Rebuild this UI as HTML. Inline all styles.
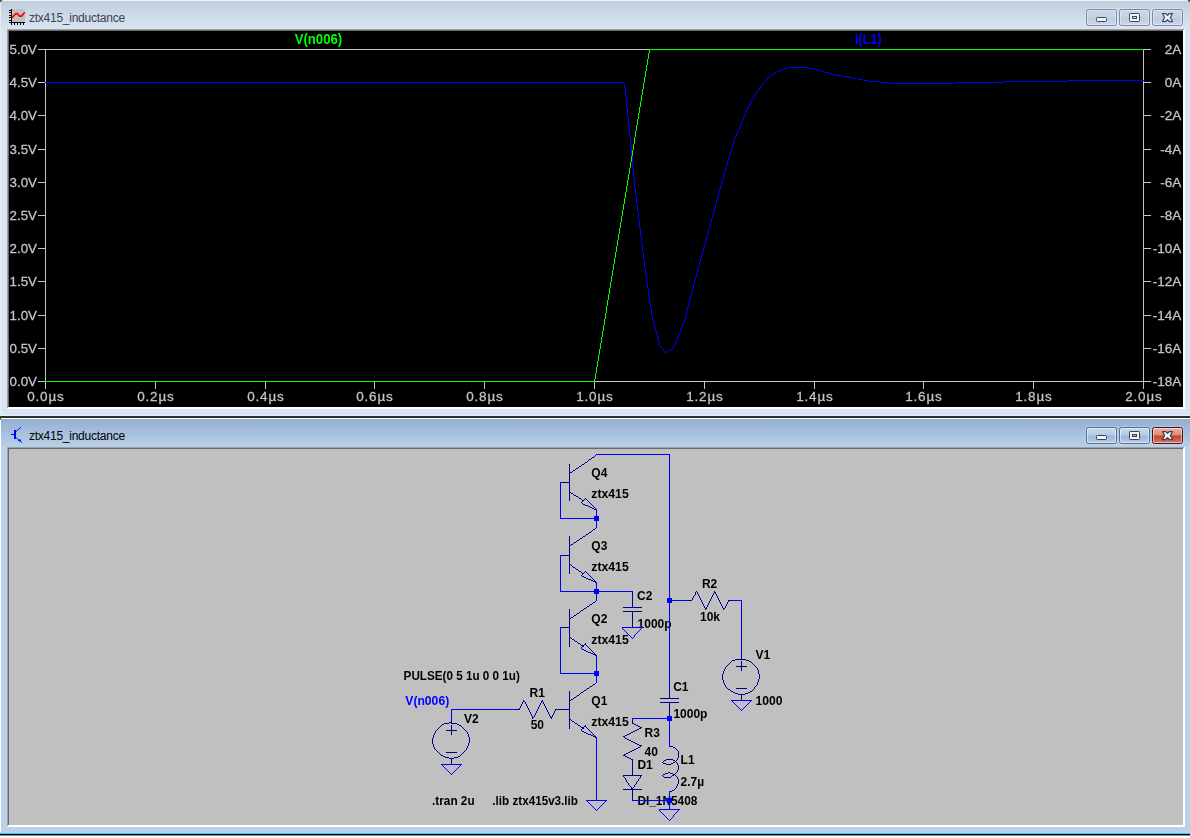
<!DOCTYPE html>
<html><head><meta charset="utf-8"><title>ztx415_inductance</title>
<style>
html,body{margin:0;padding:0;}
body{width:1190px;height:838px;overflow:hidden;background:#fff;position:relative;font-family:"Liberation Sans",sans-serif;}
.abs{position:absolute;}
.win{position:absolute;left:0;width:1190px;}
.title{position:absolute;left:29px;font-size:12px;color:#000;white-space:nowrap;letter-spacing:-0.25px;}
.btn{position:absolute;width:29px;height:15px;border:1px solid #8a9bb8;border-radius:2.5px;box-shadow:inset 0 0 0 1px rgba(255,255,255,.45);}
svg{position:absolute;left:0;top:0;}
svg text{font-family:"Liberation Sans",sans-serif;}
.pt text{stroke:#c4c4c4;stroke-width:0.28px;}
</style></head>
<body>
<div class="abs" style="left:0;top:0;width:1190px;height:416px;background:#d7e4f2;"></div>
<div class="abs" style="left:0;top:0;width:1190px;height:30px;background:linear-gradient(#bfcddb,#d9e5f3);"></div>
<div class="abs" style="left:0;top:0;width:1190px;height:1px;background:#eef1f7;"></div>
<div class="abs" style="left:0;top:0;width:1px;height:416px;background:#e9ecf3;"></div>
<div class="abs" style="left:0;top:415px;width:1190px;height:1px;background:#e6eefa;"></div>
<div class="abs" style="left:7px;top:29px;width:1178px;height:380px;background:#fff;"></div>
<div class="abs" style="left:7px;top:29px;width:1177px;height:379px;background:#a0a0a0;"></div>
<div class="abs" style="left:8px;top:30px;width:1175px;height:377px;background:#696969;"></div>
<div class="abs" style="left:9px;top:31px;width:1174px;height:376px;background:#000;"></div>
<div class="abs" style="left:7px;top:408px;width:1178px;height:1px;background:#fff;"></div>
<div class="abs" style="left:1184px;top:29px;width:1px;height:380px;background:#fff;"></div>
<div class="abs" style="left:8px;top:407px;width:1176px;height:1px;background:#fff;"></div>
<div class="abs" style="left:1183px;top:30px;width:1px;height:378px;background:#fff;"></div>
<div class="title" style="top:11px;color:#3c4350;">ztx415_inductance</div>
<div class="abs" style="left:0;top:416px;width:1190px;height:2px;background:#2e2e2e;"></div>
<div class="abs" style="left:0;top:418px;width:1190px;height:1px;background:#fff;"></div>
<div class="abs" style="left:0;top:419px;width:1190px;height:414px;background:#b9d1ea;"></div>
<div class="abs" style="left:0;top:419px;width:1190px;height:29px;background:linear-gradient(#94b0d0,#b9d1ea);"></div>
<div class="abs" style="left:0;top:418px;width:1px;height:416px;background:#fff;"></div>
<div class="abs" style="left:0;top:832px;width:1190px;height:1px;background:#c5d0ec;"></div>
<div class="abs" style="left:0;top:833px;width:1190px;height:1px;background:#2fd0e8;"></div>
<div class="abs" style="left:0;top:834px;width:1190px;height:1px;background:#000;"></div>
<div class="abs" style="left:0;top:835px;width:1190px;height:1px;background:#8a8a8a;"></div>
<div class="abs" style="left:0;top:836px;width:1190px;height:2px;background:#fff;"></div>
<div class="abs" style="left:7px;top:447px;width:1178px;height:380px;background:#fff;"></div>
<div class="abs" style="left:7px;top:447px;width:1177px;height:379px;background:#a0a0a0;"></div>
<div class="abs" style="left:8px;top:448px;width:1175px;height:377px;background:#696969;"></div>
<div class="abs" style="left:9px;top:449px;width:1174px;height:376px;background:#c0c0c0;"></div>
<div class="abs" style="left:8px;top:825px;width:1176px;height:1px;background:#fff;"></div>
<div class="abs" style="left:1183px;top:448px;width:1px;height:378px;background:#fff;"></div>
<div class="title" style="top:429px;">ztx415_inductance</div>
<div class="btn" style="left:1086px;top:9px;width:29px;background:linear-gradient(#c8d6e6 0%,#c5d3e4 47%,#bccbde 53%,#cbd9ea 100%);border-color:#7a88ac;box-shadow:inset 0 0 0 1px rgba(255,255,255,.35),0 0 0 1px rgba(240,246,252,.35);"></div><div class="btn" style="left:1119px;top:9px;width:29px;background:linear-gradient(#c8d6e6 0%,#c5d3e4 47%,#bccbde 53%,#cbd9ea 100%);border-color:#7a88ac;box-shadow:inset 0 0 0 1px rgba(255,255,255,.35),0 0 0 1px rgba(240,246,252,.35);"></div><div class="btn" style="left:1152px;top:9px;width:29px;background:linear-gradient(#c8d6e6 0%,#c5d3e4 47%,#bccbde 53%,#cbd9ea 100%);border-color:#7a88ac;box-shadow:inset 0 0 0 1px rgba(255,255,255,.35),0 0 0 1px rgba(240,246,252,.35);"></div>
<div class="btn" style="left:1086px;top:427px;width:29px;background:linear-gradient(#c6d8ee 0%,#b6cce6 47%,#9cb8d8 53%,#b4cce7 100%);border-color:#586d92;box-shadow:inset 0 0 0 1px rgba(255,255,255,.5),0 0 0 1px rgba(200,225,250,.35);"></div><div class="btn" style="left:1119px;top:427px;width:29px;background:linear-gradient(#c6d8ee 0%,#b6cce6 47%,#9cb8d8 53%,#b4cce7 100%);border-color:#586d92;box-shadow:inset 0 0 0 1px rgba(255,255,255,.5),0 0 0 1px rgba(200,225,250,.35);"></div><div class="btn" style="left:1152px;top:427px;width:29px;background:linear-gradient(#eeb0a1 0%,#dd8b78 47%,#c2442a 53%,#d97a63 100%);border-color:#4a0f1c;box-shadow:inset 0 0 0 1px rgba(255,255,255,.5),0 0 0 1px rgba(200,225,250,.35);"></div>
<svg width="1190" height="416" viewBox="0 0 1190 416" style="will-change:transform">
<rect x="38" y="49" width="1113" height="1" fill="#c4c4c4"/>
<rect x="38" y="381" width="1113" height="1" fill="#c4c4c4"/>
<rect x="45" y="49" width="1" height="340" fill="#c4c4c4"/>
<rect x="1143" y="49" width="1" height="340" fill="#c4c4c4"/>
<rect x="38" y="49" width="8" height="1" fill="#c4c4c4"/>
<rect x="1143" y="49" width="8" height="1" fill="#c4c4c4"/>
<rect x="38" y="82" width="8" height="1" fill="#c4c4c4"/>
<rect x="1143" y="82" width="8" height="1" fill="#c4c4c4"/>
<rect x="38" y="115" width="8" height="1" fill="#c4c4c4"/>
<rect x="1143" y="115" width="8" height="1" fill="#c4c4c4"/>
<rect x="38" y="149" width="8" height="1" fill="#c4c4c4"/>
<rect x="1143" y="149" width="8" height="1" fill="#c4c4c4"/>
<rect x="38" y="182" width="8" height="1" fill="#c4c4c4"/>
<rect x="1143" y="182" width="8" height="1" fill="#c4c4c4"/>
<rect x="38" y="215" width="8" height="1" fill="#c4c4c4"/>
<rect x="1143" y="215" width="8" height="1" fill="#c4c4c4"/>
<rect x="38" y="248" width="8" height="1" fill="#c4c4c4"/>
<rect x="1143" y="248" width="8" height="1" fill="#c4c4c4"/>
<rect x="38" y="281" width="8" height="1" fill="#c4c4c4"/>
<rect x="1143" y="281" width="8" height="1" fill="#c4c4c4"/>
<rect x="38" y="315" width="8" height="1" fill="#c4c4c4"/>
<rect x="1143" y="315" width="8" height="1" fill="#c4c4c4"/>
<rect x="38" y="348" width="8" height="1" fill="#c4c4c4"/>
<rect x="1143" y="348" width="8" height="1" fill="#c4c4c4"/>
<rect x="38" y="381" width="8" height="1" fill="#c4c4c4"/>
<rect x="1143" y="381" width="8" height="1" fill="#c4c4c4"/>
<rect x="45" y="381" width="1" height="8" fill="#c4c4c4"/>
<rect x="155" y="381" width="1" height="8" fill="#c4c4c4"/>
<rect x="265" y="381" width="1" height="8" fill="#c4c4c4"/>
<rect x="374" y="381" width="1" height="8" fill="#c4c4c4"/>
<rect x="484" y="381" width="1" height="8" fill="#c4c4c4"/>
<rect x="594" y="381" width="1" height="8" fill="#c4c4c4"/>
<rect x="704" y="381" width="1" height="8" fill="#c4c4c4"/>
<rect x="814" y="381" width="1" height="8" fill="#c4c4c4"/>
<rect x="923" y="381" width="1" height="8" fill="#c4c4c4"/>
<rect x="1033" y="381" width="1" height="8" fill="#c4c4c4"/>
<rect x="1143" y="381" width="1" height="8" fill="#c4c4c4"/>
<g class="pt">
<text x="9.6" y="53.7" font-size="13.5" fill="#c4c4c4" textLength="27.4" lengthAdjust="spacingAndGlyphs">5.0V</text>
<text x="1181.3" y="53.7" font-size="13.5" fill="#c4c4c4" text-anchor="end">2A</text>
<text x="9.6" y="86.7" font-size="13.5" fill="#c4c4c4" textLength="27.4" lengthAdjust="spacingAndGlyphs">4.5V</text>
<text x="1181.3" y="86.7" font-size="13.5" fill="#c4c4c4" text-anchor="end">0A</text>
<text x="9.6" y="119.7" font-size="13.5" fill="#c4c4c4" textLength="27.4" lengthAdjust="spacingAndGlyphs">4.0V</text>
<text x="1181.3" y="119.7" font-size="13.5" fill="#c4c4c4" text-anchor="end">-2A</text>
<text x="9.6" y="153.7" font-size="13.5" fill="#c4c4c4" textLength="27.4" lengthAdjust="spacingAndGlyphs">3.5V</text>
<text x="1181.3" y="153.7" font-size="13.5" fill="#c4c4c4" text-anchor="end">-4A</text>
<text x="9.6" y="186.7" font-size="13.5" fill="#c4c4c4" textLength="27.4" lengthAdjust="spacingAndGlyphs">3.0V</text>
<text x="1181.3" y="186.7" font-size="13.5" fill="#c4c4c4" text-anchor="end">-6A</text>
<text x="9.6" y="219.7" font-size="13.5" fill="#c4c4c4" textLength="27.4" lengthAdjust="spacingAndGlyphs">2.5V</text>
<text x="1181.3" y="219.7" font-size="13.5" fill="#c4c4c4" text-anchor="end">-8A</text>
<text x="9.6" y="252.7" font-size="13.5" fill="#c4c4c4" textLength="27.4" lengthAdjust="spacingAndGlyphs">2.0V</text>
<text x="1181.3" y="252.7" font-size="13.5" fill="#c4c4c4" text-anchor="end">-10A</text>
<text x="9.6" y="285.7" font-size="13.5" fill="#c4c4c4" textLength="27.4" lengthAdjust="spacingAndGlyphs">1.5V</text>
<text x="1181.3" y="285.7" font-size="13.5" fill="#c4c4c4" text-anchor="end">-12A</text>
<text x="9.6" y="319.7" font-size="13.5" fill="#c4c4c4" textLength="27.4" lengthAdjust="spacingAndGlyphs">1.0V</text>
<text x="1181.3" y="319.7" font-size="13.5" fill="#c4c4c4" text-anchor="end">-14A</text>
<text x="9.6" y="352.7" font-size="13.5" fill="#c4c4c4" textLength="27.4" lengthAdjust="spacingAndGlyphs">0.5V</text>
<text x="1181.3" y="352.7" font-size="13.5" fill="#c4c4c4" text-anchor="end">-16A</text>
<text x="9.6" y="385.7" font-size="13.5" fill="#c4c4c4" textLength="27.4" lengthAdjust="spacingAndGlyphs">0.0V</text>
<text x="1181.3" y="385.7" font-size="13.5" fill="#c4c4c4" text-anchor="end">-18A</text>
<text x="45.5" y="401.3" font-size="13.5" fill="#c4c4c4" text-anchor="middle" textLength="36.5" lengthAdjust="spacing">0.0µs</text>
<text x="155.5" y="401.3" font-size="13.5" fill="#c4c4c4" text-anchor="middle" textLength="36.5" lengthAdjust="spacing">0.2µs</text>
<text x="265.5" y="401.3" font-size="13.5" fill="#c4c4c4" text-anchor="middle" textLength="36.5" lengthAdjust="spacing">0.4µs</text>
<text x="374.5" y="401.3" font-size="13.5" fill="#c4c4c4" text-anchor="middle" textLength="36.5" lengthAdjust="spacing">0.6µs</text>
<text x="484.5" y="401.3" font-size="13.5" fill="#c4c4c4" text-anchor="middle" textLength="36.5" lengthAdjust="spacing">0.8µs</text>
<text x="594.5" y="401.3" font-size="13.5" fill="#c4c4c4" text-anchor="middle" textLength="36.5" lengthAdjust="spacing">1.0µs</text>
<text x="704.5" y="401.3" font-size="13.5" fill="#c4c4c4" text-anchor="middle" textLength="36.5" lengthAdjust="spacing">1.2µs</text>
<text x="814.5" y="401.3" font-size="13.5" fill="#c4c4c4" text-anchor="middle" textLength="36.5" lengthAdjust="spacing">1.4µs</text>
<text x="923.5" y="401.3" font-size="13.5" fill="#c4c4c4" text-anchor="middle" textLength="36.5" lengthAdjust="spacing">1.6µs</text>
<text x="1033.5" y="401.3" font-size="13.5" fill="#c4c4c4" text-anchor="middle" textLength="36.5" lengthAdjust="spacing">1.8µs</text>
<text x="1143.5" y="401.3" font-size="13.5" fill="#c4c4c4" text-anchor="middle" textLength="36.5" lengthAdjust="spacing">2.0µs</text>
</g>
<text x="294.7" y="43.8" font-size="14" font-weight="bold" fill="#00ff00" textLength="47.5" lengthAdjust="spacingAndGlyphs">V(n006)</text>
<text x="854.7" y="43.8" font-size="14" font-weight="bold" fill="#0000ff" textLength="26.8" lengthAdjust="spacingAndGlyphs">I(L1)</text>
<path shape-rendering="crispEdges" fill="#00ff00" stroke="none" d="M649 49h495v1h-495zM649 50h1v1h-1zM649 51h1v1h-1zM649 52h1v1h-1zM648 53h1v1h-1zM648 54h1v1h-1zM648 55h1v1h-1zM648 56h1v1h-1zM648 57h1v1h-1zM648 58h1v1h-1zM647 59h1v1h-1zM647 60h1v1h-1zM647 61h1v1h-1zM647 62h1v1h-1zM647 63h1v1h-1zM647 64h1v1h-1zM646 65h1v1h-1zM646 66h1v1h-1zM646 67h1v1h-1zM646 68h1v1h-1zM646 69h1v1h-1zM646 70h1v1h-1zM645 71h1v1h-1zM645 72h1v1h-1zM645 73h1v1h-1zM645 74h1v1h-1zM645 75h1v1h-1zM645 76h1v1h-1zM644 77h1v1h-1zM644 78h1v1h-1zM644 79h1v1h-1zM644 80h1v1h-1zM644 81h1v1h-1zM644 82h1v1h-1zM643 83h1v1h-1zM643 84h1v1h-1zM643 85h1v1h-1zM643 86h1v1h-1zM643 87h1v1h-1zM643 88h1v1h-1zM642 89h1v1h-1zM642 90h1v1h-1zM642 91h1v1h-1zM642 92h1v1h-1zM642 93h1v1h-1zM642 94h1v1h-1zM641 95h1v1h-1zM641 96h1v1h-1zM641 97h1v1h-1zM641 98h1v1h-1zM641 99h1v1h-1zM641 100h1v1h-1zM640 101h1v1h-1zM640 102h1v1h-1zM640 103h1v1h-1zM640 104h1v1h-1zM640 105h1v1h-1zM640 106h1v1h-1zM639 107h1v1h-1zM639 108h1v1h-1zM639 109h1v1h-1zM639 110h1v1h-1zM639 111h1v1h-1zM639 112h1v1h-1zM638 113h1v1h-1zM638 114h1v1h-1zM638 115h1v1h-1zM638 116h1v1h-1zM638 117h1v1h-1zM638 118h1v1h-1zM637 119h1v1h-1zM637 120h1v1h-1zM637 121h1v1h-1zM637 122h1v1h-1zM637 123h1v1h-1zM637 124h1v1h-1zM636 125h1v1h-1zM636 126h1v1h-1zM636 127h1v1h-1zM636 128h1v1h-1zM636 129h1v1h-1zM636 130h1v1h-1zM635 131h1v1h-1zM635 132h1v1h-1zM635 133h1v1h-1zM635 134h1v1h-1zM635 135h1v1h-1zM635 136h1v1h-1zM634 137h1v1h-1zM634 138h1v1h-1zM634 139h1v1h-1zM634 140h1v1h-1zM634 141h1v1h-1zM634 142h1v1h-1zM634 143h1v1h-1zM633 144h1v1h-1zM633 145h1v1h-1zM633 146h1v1h-1zM633 147h1v1h-1zM633 148h1v1h-1zM633 149h1v1h-1zM632 150h1v1h-1zM632 151h1v1h-1zM632 152h1v1h-1zM632 153h1v1h-1zM632 154h1v1h-1zM632 155h1v1h-1zM631 156h1v1h-1zM631 157h1v1h-1zM631 158h1v1h-1zM631 159h1v1h-1zM631 160h1v1h-1zM631 161h1v1h-1zM630 162h1v1h-1zM630 163h1v1h-1zM630 164h1v1h-1zM630 165h1v1h-1zM630 166h1v1h-1zM630 167h1v1h-1zM629 168h1v1h-1zM629 169h1v1h-1zM629 170h1v1h-1zM629 171h1v1h-1zM629 172h1v1h-1zM629 173h1v1h-1zM628 174h1v1h-1zM628 175h1v1h-1zM628 176h1v1h-1zM628 177h1v1h-1zM628 178h1v1h-1zM628 179h1v1h-1zM627 180h1v1h-1zM627 181h1v1h-1zM627 182h1v1h-1zM627 183h1v1h-1zM627 184h1v1h-1zM627 185h1v1h-1zM626 186h1v1h-1zM626 187h1v1h-1zM626 188h1v1h-1zM626 189h1v1h-1zM626 190h1v1h-1zM626 191h1v1h-1zM625 192h1v1h-1zM625 193h1v1h-1zM625 194h1v1h-1zM625 195h1v1h-1zM625 196h1v1h-1zM625 197h1v1h-1zM624 198h1v1h-1zM624 199h1v1h-1zM624 200h1v1h-1zM624 201h1v1h-1zM624 202h1v1h-1zM624 203h1v1h-1zM623 204h1v1h-1zM623 205h1v1h-1zM623 206h1v1h-1zM623 207h1v1h-1zM623 208h1v1h-1zM623 209h1v1h-1zM622 210h1v1h-1zM622 211h1v1h-1zM622 212h1v1h-1zM622 213h1v1h-1zM622 214h1v1h-1zM622 215h1v1h-1zM621 216h1v1h-1zM621 217h1v1h-1zM621 218h1v1h-1zM621 219h1v1h-1zM621 220h1v1h-1zM621 221h1v1h-1zM620 222h1v1h-1zM620 223h1v1h-1zM620 224h1v1h-1zM620 225h1v1h-1zM620 226h1v1h-1zM620 227h1v1h-1zM619 228h1v1h-1zM619 229h1v1h-1zM619 230h1v1h-1zM619 231h1v1h-1zM619 232h1v1h-1zM619 233h1v1h-1zM618 234h1v1h-1zM618 235h1v1h-1zM618 236h1v1h-1zM618 237h1v1h-1zM618 238h1v1h-1zM618 239h1v1h-1zM617 240h1v1h-1zM617 241h1v1h-1zM617 242h1v1h-1zM617 243h1v1h-1zM617 244h1v1h-1zM617 245h1v1h-1zM616 246h1v1h-1zM616 247h1v1h-1zM616 248h1v1h-1zM616 249h1v1h-1zM616 250h1v1h-1zM616 251h1v1h-1zM615 252h1v1h-1zM615 253h1v1h-1zM615 254h1v1h-1zM615 255h1v1h-1zM615 256h1v1h-1zM615 257h1v1h-1zM614 258h1v1h-1zM614 259h1v1h-1zM614 260h1v1h-1zM614 261h1v1h-1zM614 262h1v1h-1zM614 263h1v1h-1zM613 264h1v1h-1zM613 265h1v1h-1zM613 266h1v1h-1zM613 267h1v1h-1zM613 268h1v1h-1zM613 269h1v1h-1zM612 270h1v1h-1zM612 271h1v1h-1zM612 272h1v1h-1zM612 273h1v1h-1zM612 274h1v1h-1zM612 275h1v1h-1zM611 276h1v1h-1zM611 277h1v1h-1zM611 278h1v1h-1zM611 279h1v1h-1zM611 280h1v1h-1zM611 281h1v1h-1zM610 282h1v1h-1zM610 283h1v1h-1zM610 284h1v1h-1zM610 285h1v1h-1zM610 286h1v1h-1zM610 287h1v1h-1zM609 288h1v1h-1zM609 289h1v1h-1zM609 290h1v1h-1zM609 291h1v1h-1zM609 292h1v1h-1zM609 293h1v1h-1zM608 294h1v1h-1zM608 295h1v1h-1zM608 296h1v1h-1zM608 297h1v1h-1zM608 298h1v1h-1zM608 299h1v1h-1zM607 300h1v1h-1zM607 301h1v1h-1zM607 302h1v1h-1zM607 303h1v1h-1zM607 304h1v1h-1zM607 305h1v1h-1zM606 306h1v1h-1zM606 307h1v1h-1zM606 308h1v1h-1zM606 309h1v1h-1zM606 310h1v1h-1zM606 311h1v1h-1zM606 312h1v1h-1zM605 313h1v1h-1zM605 314h1v1h-1zM605 315h1v1h-1zM605 316h1v1h-1zM605 317h1v1h-1zM605 318h1v1h-1zM604 319h1v1h-1zM604 320h1v1h-1zM604 321h1v1h-1zM604 322h1v1h-1zM604 323h1v1h-1zM604 324h1v1h-1zM603 325h1v1h-1zM603 326h1v1h-1zM603 327h1v1h-1zM603 328h1v1h-1zM603 329h1v1h-1zM603 330h1v1h-1zM602 331h1v1h-1zM602 332h1v1h-1zM602 333h1v1h-1zM602 334h1v1h-1zM602 335h1v1h-1zM602 336h1v1h-1zM601 337h1v1h-1zM601 338h1v1h-1zM601 339h1v1h-1zM601 340h1v1h-1zM601 341h1v1h-1zM601 342h1v1h-1zM600 343h1v1h-1zM600 344h1v1h-1zM600 345h1v1h-1zM600 346h1v1h-1zM600 347h1v1h-1zM600 348h1v1h-1zM599 349h1v1h-1zM599 350h1v1h-1zM599 351h1v1h-1zM599 352h1v1h-1zM599 353h1v1h-1zM599 354h1v1h-1zM598 355h1v1h-1zM598 356h1v1h-1zM598 357h1v1h-1zM598 358h1v1h-1zM598 359h1v1h-1zM598 360h1v1h-1zM597 361h1v1h-1zM597 362h1v1h-1zM597 363h1v1h-1zM597 364h1v1h-1zM597 365h1v1h-1zM597 366h1v1h-1zM596 367h1v1h-1zM596 368h1v1h-1zM596 369h1v1h-1zM596 370h1v1h-1zM596 371h1v1h-1zM596 372h1v1h-1zM595 373h1v1h-1zM595 374h1v1h-1zM595 375h1v1h-1zM595 376h1v1h-1zM595 377h1v1h-1zM595 378h1v1h-1zM594 379h1v1h-1zM594 380h1v1h-1zM45 381h550v1h-550z"/>
<path shape-rendering="crispEdges" fill="#0000ff" stroke="none" d="M788 67h20v1h-20zM784 68h4v1h-4zM808 68h6v1h-6zM782 69h2v1h-2zM814 69h4v1h-4zM779 70h3v1h-3zM818 70h4v1h-4zM777 71h2v1h-2zM822 71h3v1h-3zM775 72h2v1h-2zM825 72h4v1h-4zM773 73h2v1h-2zM829 73h3v1h-3zM772 74h1v1h-1zM832 74h5v1h-5zM771 75h1v1h-1zM837 75h5v1h-5zM770 76h1v1h-1zM842 76h6v1h-6zM768 77h2v1h-2zM848 77h5v1h-5zM767 78h1v1h-1zM853 78h5v1h-5zM767 79h1v1h-1zM858 79h5v1h-5zM766 80h1v1h-1zM863 80h5v1h-5zM1068 80h76v1h-76zM765 81h1v1h-1zM868 81h12v1h-12zM1004 81h64v1h-64zM45 82h579v1h-579zM764 82h1v1h-1zM880 82h9v1h-9zM954 82h50v1h-50zM624 83h1v1h-1zM763 83h1v1h-1zM889 83h65v1h-65zM624 84h1v1h-1zM762 84h1v1h-1zM624 85h1v1h-1zM761 85h1v1h-1zM624 86h1v1h-1zM761 86h1v1h-1zM624 87h1v1h-1zM760 87h1v1h-1zM624 88h1v1h-1zM759 88h1v1h-1zM625 89h1v1h-1zM759 89h1v1h-1zM625 90h1v1h-1zM758 90h1v1h-1zM625 91h1v1h-1zM757 91h1v1h-1zM625 92h1v1h-1zM756 92h1v1h-1zM625 93h1v1h-1zM756 93h1v1h-1zM625 94h1v1h-1zM755 94h1v1h-1zM625 95h1v1h-1zM754 95h1v1h-1zM625 96h1v1h-1zM754 96h1v1h-1zM625 97h1v1h-1zM753 97h1v1h-1zM626 98h1v1h-1zM753 98h1v1h-1zM626 99h1v1h-1zM752 99h1v1h-1zM626 100h1v1h-1zM751 100h1v1h-1zM626 101h1v1h-1zM751 101h1v1h-1zM626 102h1v1h-1zM750 102h1v1h-1zM626 103h1v1h-1zM750 103h1v1h-1zM626 104h1v1h-1zM749 104h1v1h-1zM626 105h1v1h-1zM749 105h1v1h-1zM626 106h1v1h-1zM748 106h1v1h-1zM627 107h1v1h-1zM748 107h1v1h-1zM627 108h1v1h-1zM747 108h1v1h-1zM627 109h1v1h-1zM747 109h1v1h-1zM627 110h1v1h-1zM746 110h1v1h-1zM627 111h1v1h-1zM746 111h1v1h-1zM627 112h1v1h-1zM745 112h1v1h-1zM627 113h1v1h-1zM745 113h1v1h-1zM627 114h1v1h-1zM745 114h1v1h-1zM627 115h1v1h-1zM744 115h1v1h-1zM627 116h1v1h-1zM744 116h1v1h-1zM628 117h1v1h-1zM743 117h1v1h-1zM628 118h1v1h-1zM743 118h1v1h-1zM628 119h1v1h-1zM743 119h1v1h-1zM628 120h1v1h-1zM742 120h1v1h-1zM628 121h1v1h-1zM742 121h1v1h-1zM628 122h1v1h-1zM741 122h1v1h-1zM628 123h1v1h-1zM741 123h1v1h-1zM628 124h1v1h-1zM740 124h1v1h-1zM628 125h1v1h-1zM740 125h1v1h-1zM629 126h1v1h-1zM740 126h1v1h-1zM629 127h1v1h-1zM739 127h1v1h-1zM629 128h1v1h-1zM739 128h1v1h-1zM629 129h1v1h-1zM738 129h1v1h-1zM629 130h1v1h-1zM738 130h1v1h-1zM629 131h1v1h-1zM737 131h1v1h-1zM629 132h1v1h-1zM737 132h1v1h-1zM629 133h1v1h-1zM737 133h1v1h-1zM629 134h1v1h-1zM736 134h1v1h-1zM629 135h1v1h-1zM736 135h1v1h-1zM630 136h1v1h-1zM735 136h1v1h-1zM630 137h1v1h-1zM735 137h1v1h-1zM630 138h1v1h-1zM734 138h1v1h-1zM630 139h1v1h-1zM734 139h1v1h-1zM630 140h1v1h-1zM733 140h1v1h-1zM630 141h1v1h-1zM733 141h1v1h-1zM630 142h1v1h-1zM733 142h1v1h-1zM630 143h1v1h-1zM733 143h1v1h-1zM630 144h1v1h-1zM732 144h1v1h-1zM630 145h1v1h-1zM732 145h1v1h-1zM631 146h1v1h-1zM732 146h1v1h-1zM631 147h1v1h-1zM732 147h1v1h-1zM631 148h1v1h-1zM731 148h1v1h-1zM631 149h1v1h-1zM731 149h1v1h-1zM631 150h1v1h-1zM731 150h1v1h-1zM631 151h1v1h-1zM730 151h1v1h-1zM631 152h1v1h-1zM730 152h1v1h-1zM631 153h1v1h-1zM730 153h1v1h-1zM631 154h1v1h-1zM729 154h1v1h-1zM631 155h1v1h-1zM729 155h1v1h-1zM632 156h1v1h-1zM729 156h1v1h-1zM632 157h1v1h-1zM729 157h1v1h-1zM632 158h1v1h-1zM728 158h1v1h-1zM632 159h1v1h-1zM728 159h1v1h-1zM632 160h1v1h-1zM728 160h1v1h-1zM632 161h1v1h-1zM727 161h1v1h-1zM632 162h1v1h-1zM727 162h1v1h-1zM632 163h1v1h-1zM727 163h1v1h-1zM632 164h1v1h-1zM727 164h1v1h-1zM632 165h1v1h-1zM726 165h1v1h-1zM632 166h1v1h-1zM726 166h1v1h-1zM633 167h1v1h-1zM726 167h1v1h-1zM633 168h1v1h-1zM725 168h1v1h-1zM633 169h1v1h-1zM725 169h1v1h-1zM633 170h1v1h-1zM725 170h1v1h-1zM633 171h1v1h-1zM725 171h1v1h-1zM633 172h1v1h-1zM724 172h1v1h-1zM633 173h1v1h-1zM724 173h1v1h-1zM633 174h1v1h-1zM724 174h1v1h-1zM633 175h1v1h-1zM723 175h1v1h-1zM633 176h1v1h-1zM723 176h1v1h-1zM633 177h1v1h-1zM723 177h1v1h-1zM634 178h1v1h-1zM723 178h1v1h-1zM634 179h1v1h-1zM722 179h1v1h-1zM634 180h1v1h-1zM722 180h1v1h-1zM634 181h1v1h-1zM722 181h1v1h-1zM634 182h1v1h-1zM721 182h1v1h-1zM634 183h1v1h-1zM721 183h1v1h-1zM634 184h1v1h-1zM721 184h1v1h-1zM634 185h1v1h-1zM721 185h1v1h-1zM634 186h1v1h-1zM720 186h1v1h-1zM635 187h1v1h-1zM720 187h1v1h-1zM635 188h1v1h-1zM720 188h1v1h-1zM635 189h1v1h-1zM719 189h1v1h-1zM635 190h1v1h-1zM719 190h1v1h-1zM635 191h1v1h-1zM719 191h1v1h-1zM635 192h1v1h-1zM719 192h1v1h-1zM635 193h1v1h-1zM718 193h1v1h-1zM635 194h1v1h-1zM718 194h1v1h-1zM636 195h1v1h-1zM718 195h1v1h-1zM636 196h1v1h-1zM718 196h1v1h-1zM636 197h1v1h-1zM717 197h1v1h-1zM636 198h1v1h-1zM717 198h1v1h-1zM636 199h1v1h-1zM717 199h1v1h-1zM636 200h1v1h-1zM716 200h1v1h-1zM636 201h1v1h-1zM716 201h1v1h-1zM636 202h1v1h-1zM716 202h1v1h-1zM636 203h1v1h-1zM716 203h1v1h-1zM637 204h1v1h-1zM715 204h1v1h-1zM637 205h1v1h-1zM715 205h1v1h-1zM637 206h1v1h-1zM715 206h1v1h-1zM637 207h1v1h-1zM715 207h1v1h-1zM637 208h1v1h-1zM714 208h1v1h-1zM637 209h1v1h-1zM714 209h1v1h-1zM637 210h1v1h-1zM714 210h1v1h-1zM637 211h1v1h-1zM713 211h1v1h-1zM638 212h1v1h-1zM713 212h1v1h-1zM638 213h1v1h-1zM713 213h1v1h-1zM638 214h1v1h-1zM713 214h1v1h-1zM638 215h1v1h-1zM712 215h1v1h-1zM638 216h1v1h-1zM712 216h1v1h-1zM638 217h1v1h-1zM712 217h1v1h-1zM638 218h1v1h-1zM711 218h1v1h-1zM638 219h1v1h-1zM711 219h1v1h-1zM639 220h1v1h-1zM711 220h1v1h-1zM639 221h1v1h-1zM711 221h1v1h-1zM639 222h1v1h-1zM710 222h1v1h-1zM639 223h1v1h-1zM710 223h1v1h-1zM639 224h1v1h-1zM710 224h1v1h-1zM639 225h1v1h-1zM710 225h1v1h-1zM639 226h1v1h-1zM709 226h1v1h-1zM639 227h1v1h-1zM709 227h1v1h-1zM640 228h1v1h-1zM709 228h1v1h-1zM640 229h1v1h-1zM708 229h1v1h-1zM640 230h1v1h-1zM708 230h1v1h-1zM640 231h1v1h-1zM708 231h1v1h-1zM640 232h1v1h-1zM708 232h1v1h-1zM640 233h1v1h-1zM707 233h1v1h-1zM640 234h1v1h-1zM707 234h1v1h-1zM640 235h1v1h-1zM707 235h1v1h-1zM640 236h1v1h-1zM706 236h1v1h-1zM641 237h1v1h-1zM706 237h1v1h-1zM641 238h1v1h-1zM706 238h1v1h-1zM641 239h1v1h-1zM706 239h1v1h-1zM641 240h1v1h-1zM705 240h1v1h-1zM641 241h1v1h-1zM705 241h1v1h-1zM641 242h1v1h-1zM705 242h1v1h-1zM641 243h1v1h-1zM705 243h1v1h-1zM641 244h1v1h-1zM704 244h1v1h-1zM642 245h1v1h-1zM704 245h1v1h-1zM642 246h1v1h-1zM704 246h1v1h-1zM642 247h1v1h-1zM703 247h1v1h-1zM642 248h1v1h-1zM703 248h1v1h-1zM642 249h1v1h-1zM703 249h1v1h-1zM642 250h1v1h-1zM703 250h1v1h-1zM642 251h1v1h-1zM702 251h1v1h-1zM642 252h1v1h-1zM702 252h1v1h-1zM643 253h1v1h-1zM702 253h1v1h-1zM643 254h1v1h-1zM702 254h1v1h-1zM643 255h1v1h-1zM701 255h1v1h-1zM643 256h1v1h-1zM701 256h1v1h-1zM643 257h1v1h-1zM701 257h1v1h-1zM643 258h1v1h-1zM700 258h1v1h-1zM643 259h1v1h-1zM700 259h1v1h-1zM644 260h1v1h-1zM700 260h1v1h-1zM644 261h1v1h-1zM700 261h1v1h-1zM644 262h1v1h-1zM699 262h1v1h-1zM644 263h1v1h-1zM699 263h1v1h-1zM644 264h1v1h-1zM699 264h1v1h-1zM644 265h1v1h-1zM699 265h1v1h-1zM644 266h1v1h-1zM698 266h1v1h-1zM645 267h1v1h-1zM698 267h1v1h-1zM645 268h1v1h-1zM698 268h1v1h-1zM645 269h1v1h-1zM697 269h1v1h-1zM645 270h1v1h-1zM697 270h1v1h-1zM645 271h1v1h-1zM697 271h1v1h-1zM645 272h1v1h-1zM697 272h1v1h-1zM645 273h1v1h-1zM696 273h1v1h-1zM645 274h1v1h-1zM696 274h1v1h-1zM646 275h1v1h-1zM696 275h1v1h-1zM646 276h1v1h-1zM696 276h1v1h-1zM646 277h1v1h-1zM695 277h1v1h-1zM646 278h1v1h-1zM695 278h1v1h-1zM646 279h1v1h-1zM695 279h1v1h-1zM646 280h1v1h-1zM694 280h1v1h-1zM646 281h1v1h-1zM694 281h1v1h-1zM647 282h1v1h-1zM694 282h1v1h-1zM647 283h1v1h-1zM694 283h1v1h-1zM647 284h1v1h-1zM693 284h1v1h-1zM647 285h1v1h-1zM693 285h1v1h-1zM647 286h1v1h-1zM693 286h1v1h-1zM647 287h1v1h-1zM693 287h1v1h-1zM647 288h1v1h-1zM692 288h1v1h-1zM648 289h1v1h-1zM692 289h1v1h-1zM648 290h1v1h-1zM692 290h1v1h-1zM648 291h1v1h-1zM692 291h1v1h-1zM648 292h1v1h-1zM691 292h1v1h-1zM648 293h1v1h-1zM691 293h1v1h-1zM648 294h1v1h-1zM691 294h1v1h-1zM648 295h1v1h-1zM690 295h1v1h-1zM648 296h1v1h-1zM690 296h1v1h-1zM649 297h1v1h-1zM690 297h1v1h-1zM649 298h1v1h-1zM690 298h1v1h-1zM649 299h1v1h-1zM689 299h1v1h-1zM649 300h1v1h-1zM689 300h1v1h-1zM649 301h1v1h-1zM689 301h1v1h-1zM649 302h1v1h-1zM689 302h1v1h-1zM650 303h1v1h-1zM688 303h1v1h-1zM650 304h1v1h-1zM688 304h1v1h-1zM650 305h1v1h-1zM688 305h1v1h-1zM650 306h1v1h-1zM688 306h1v1h-1zM650 307h1v1h-1zM687 307h1v1h-1zM650 308h1v1h-1zM687 308h1v1h-1zM651 309h1v1h-1zM687 309h1v1h-1zM651 310h1v1h-1zM687 310h1v1h-1zM651 311h1v1h-1zM686 311h1v1h-1zM651 312h1v1h-1zM686 312h1v1h-1zM651 313h1v1h-1zM686 313h1v1h-1zM651 314h1v1h-1zM686 314h1v1h-1zM652 315h1v1h-1zM685 315h1v1h-1zM652 316h1v1h-1zM685 316h1v1h-1zM652 317h1v1h-1zM685 317h1v1h-1zM652 318h1v1h-1zM685 318h1v1h-1zM652 319h1v1h-1zM684 319h1v1h-1zM652 320h1v1h-1zM684 320h1v1h-1zM653 321h1v1h-1zM684 321h1v1h-1zM653 322h1v1h-1zM683 322h1v1h-1zM653 323h1v1h-1zM683 323h1v1h-1zM654 324h1v1h-1zM682 324h1v1h-1zM654 325h1v1h-1zM682 325h1v1h-1zM654 326h1v1h-1zM682 326h1v1h-1zM655 327h1v1h-1zM681 327h1v1h-1zM655 328h1v1h-1zM681 328h1v1h-1zM655 329h1v1h-1zM680 329h1v1h-1zM655 330h1v1h-1zM680 330h1v1h-1zM656 331h1v1h-1zM680 331h1v1h-1zM656 332h1v1h-1zM679 332h1v1h-1zM656 333h1v1h-1zM679 333h1v1h-1zM656 334h1v1h-1zM678 334h1v1h-1zM657 335h1v1h-1zM678 335h1v1h-1zM657 336h1v1h-1zM678 336h1v1h-1zM657 337h1v1h-1zM677 337h1v1h-1zM658 338h1v1h-1zM677 338h1v1h-1zM658 339h1v1h-1zM676 339h1v1h-1zM658 340h1v1h-1zM676 340h1v1h-1zM658 341h1v1h-1zM676 341h1v1h-1zM659 342h1v1h-1zM675 342h1v1h-1zM659 343h1v1h-1zM675 343h1v1h-1zM659 344h1v1h-1zM674 344h1v1h-1zM659 345h1v1h-1zM674 345h1v1h-1zM660 346h1v1h-1zM673 346h1v1h-1zM661 347h1v1h-1zM673 347h1v1h-1zM662 348h1v1h-1zM672 348h1v1h-1zM663 349h1v1h-1zM671 349h1v1h-1zM663 350h1v1h-1zM669 350h2v1h-2zM664 351h1v1h-1zM667 351h2v1h-2zM665 352h2v1h-2z"/>
</svg>

<svg width="1190" height="838" viewBox="0 0 1190 838">
<g shape-rendering="crispEdges" fill="none" stroke-width="1" stroke-linecap="square">
</g>
<path shape-rendering="crispEdges" fill="#00008b" stroke="none" d="M596 454h1v1h-1zM595 455h1v1h-1zM594 456h1v1h-1zM592 457h2v1h-2zM591 458h1v1h-1zM589 459h2v1h-2zM588 460h1v1h-1zM587 461h1v1h-1zM585 462h2v1h-2zM584 463h1v1h-1zM569 464h1v1h-1zM582 464h2v1h-2zM569 465h1v1h-1zM581 465h1v1h-1zM569 466h1v1h-1zM579 466h2v1h-2zM569 467h1v1h-1zM578 467h1v1h-1zM569 468h1v1h-1zM576 468h2v1h-2zM569 469h1v1h-1zM575 469h1v1h-1zM569 470h1v1h-1zM573 470h2v1h-2zM569 471h1v1h-1zM572 471h1v1h-1zM569 472h3v1h-3zM569 473h1v1h-1zM569 474h1v1h-1zM569 475h1v1h-1zM569 476h1v1h-1zM569 477h1v1h-1zM569 478h1v1h-1zM569 479h1v1h-1zM569 480h1v1h-1zM569 481h1v1h-1zM560 482h10v1h-10zM569 483h1v1h-1zM569 484h1v1h-1zM569 485h1v1h-1zM569 486h1v1h-1zM569 487h1v1h-1zM569 488h1v1h-1zM569 489h1v1h-1zM569 490h1v1h-1zM569 491h1v1h-1zM569 492h2v1h-2zM569 493h1v1h-1zM571 493h2v1h-2zM569 494h1v1h-1zM573 494h1v1h-1zM569 495h1v1h-1zM574 495h2v1h-2zM569 496h1v1h-1zM576 496h2v1h-2zM569 497h1v1h-1zM578 497h1v1h-1zM569 498h1v1h-1zM579 498h2v1h-2zM585 498h1v1h-1zM569 499h1v1h-1zM581 499h1v1h-1zM584 499h1v1h-1zM586 499h1v1h-1zM569 500h1v1h-1zM582 500h2v1h-2zM587 500h1v1h-1zM582 501h1v1h-1zM588 501h1v1h-1zM581 502h1v1h-1zM589 502h1v1h-1zM582 503h1v1h-1zM590 503h1v1h-1zM583 504h2v1h-2zM591 504h1v1h-1zM585 505h3v1h-3zM592 505h1v1h-1zM588 506h2v1h-2zM593 506h1v1h-1zM590 507h2v1h-2zM594 507h1v1h-1zM592 508h2v1h-2zM595 508h1v1h-1zM594 509h3v1h-3zM596 527h1v1h-1zM595 528h1v1h-1zM593 529h2v1h-2zM592 530h1v1h-1zM591 531h1v1h-1zM589 532h2v1h-2zM588 533h1v1h-1zM586 534h2v1h-2zM585 535h1v1h-1zM569 536h1v1h-1zM583 536h2v1h-2zM569 537h1v1h-1zM582 537h1v1h-1zM569 538h1v1h-1zM580 538h2v1h-2zM569 539h1v1h-1zM579 539h1v1h-1zM569 540h1v1h-1zM577 540h2v1h-2zM569 541h1v1h-1zM576 541h1v1h-1zM569 542h1v1h-1zM574 542h2v1h-2zM569 543h1v1h-1zM573 543h1v1h-1zM569 544h1v1h-1zM571 544h2v1h-2zM569 545h2v1h-2zM569 546h1v1h-1zM569 547h1v1h-1zM569 548h1v1h-1zM569 549h1v1h-1zM569 550h1v1h-1zM569 551h1v1h-1zM569 552h1v1h-1zM569 553h1v1h-1zM569 554h1v1h-1zM560 555h10v1h-10zM569 556h1v1h-1zM569 557h1v1h-1zM569 558h1v1h-1zM569 559h1v1h-1zM569 560h1v1h-1zM569 561h1v1h-1zM569 562h1v1h-1zM569 563h1v1h-1zM569 564h2v1h-2zM569 565h1v1h-1zM571 565h1v1h-1zM569 566h1v1h-1zM572 566h1v1h-1zM569 567h1v1h-1zM573 567h2v1h-2zM569 568h1v1h-1zM575 568h1v1h-1zM569 569h1v1h-1zM576 569h2v1h-2zM569 570h1v1h-1zM578 570h1v1h-1zM569 571h1v1h-1zM579 571h2v1h-2zM585 571h1v1h-1zM569 572h1v1h-1zM581 572h1v1h-1zM584 572h1v1h-1zM586 572h1v1h-1zM569 573h1v1h-1zM582 573h2v1h-2zM587 573h1v1h-1zM582 574h1v1h-1zM588 574h1v1h-1zM581 575h1v1h-1zM589 575h1v1h-1zM582 576h2v1h-2zM590 576h1v1h-1zM584 577h2v1h-2zM591 577h1v1h-1zM586 578h2v1h-2zM592 578h1v1h-1zM588 579h3v1h-3zM593 579h1v1h-1zM591 580h2v1h-2zM594 580h1v1h-1zM593 581h3v1h-3zM595 582h2v1h-2zM632 591h1v1h-1zM696 591h1v1h-1zM714 591h1v1h-1zM632 592h1v1h-1zM695 592h1v1h-1zM697 592h1v1h-1zM714 592h2v1h-2zM632 593h1v1h-1zM695 593h1v1h-1zM697 593h1v1h-1zM713 593h1v1h-1zM715 593h1v1h-1zM632 594h1v1h-1zM695 594h1v1h-1zM698 594h1v1h-1zM713 594h1v1h-1zM716 594h1v1h-1zM632 595h1v1h-1zM694 595h1v1h-1zM698 595h1v1h-1zM712 595h1v1h-1zM716 595h1v1h-1zM632 596h1v1h-1zM693 596h1v1h-1zM699 596h1v1h-1zM712 596h1v1h-1zM717 596h1v1h-1zM632 597h1v1h-1zM693 597h1v1h-1zM699 597h1v1h-1zM711 597h1v1h-1zM717 597h1v1h-1zM632 598h1v1h-1zM692 598h1v1h-1zM700 598h1v1h-1zM711 598h1v1h-1zM718 598h1v1h-1zM632 599h1v1h-1zM692 599h1v1h-1zM700 599h1v1h-1zM710 599h1v1h-1zM718 599h1v1h-1zM596 600h1v1h-1zM632 600h1v1h-1zM687 600h5v1h-5zM701 600h1v1h-1zM710 600h1v1h-1zM719 600h1v1h-1zM728 600h5v1h-5zM595 601h1v1h-1zM632 601h1v1h-1zM701 601h1v1h-1zM709 601h1v1h-1zM719 601h1v1h-1zM728 601h1v1h-1zM593 602h2v1h-2zM632 602h1v1h-1zM702 602h1v1h-1zM709 602h1v1h-1zM720 602h1v1h-1zM727 602h1v1h-1zM592 603h1v1h-1zM632 603h1v1h-1zM702 603h1v1h-1zM708 603h1v1h-1zM720 603h1v1h-1zM727 603h1v1h-1zM590 604h2v1h-2zM632 604h1v1h-1zM703 604h1v1h-1zM708 604h1v1h-1zM721 604h1v1h-1zM726 604h1v1h-1zM589 605h1v1h-1zM632 605h1v1h-1zM703 605h1v1h-1zM707 605h1v1h-1zM721 605h1v1h-1zM726 605h1v1h-1zM587 606h2v1h-2zM632 606h1v1h-1zM704 606h1v1h-1zM707 606h1v1h-1zM722 606h1v1h-1zM725 606h1v1h-1zM586 607h1v1h-1zM623 607h19v1h-19zM704 607h1v1h-1zM706 607h1v1h-1zM722 607h1v1h-1zM725 607h1v1h-1zM584 608h2v1h-2zM705 608h2v1h-2zM723 608h2v1h-2zM569 609h1v1h-1zM583 609h1v1h-1zM705 609h1v1h-1zM723 609h1v1h-1zM569 610h1v1h-1zM581 610h2v1h-2zM569 611h1v1h-1zM580 611h1v1h-1zM623 611h19v1h-19zM569 612h1v1h-1zM579 612h1v1h-1zM632 612h1v1h-1zM569 613h1v1h-1zM577 613h2v1h-2zM632 613h1v1h-1zM569 614h1v1h-1zM576 614h1v1h-1zM632 614h1v1h-1zM569 615h1v1h-1zM574 615h2v1h-2zM632 615h1v1h-1zM569 616h1v1h-1zM573 616h1v1h-1zM632 616h1v1h-1zM569 617h1v1h-1zM571 617h2v1h-2zM632 617h1v1h-1zM569 618h2v1h-2zM632 618h1v1h-1zM569 619h1v1h-1zM632 619h1v1h-1zM569 620h1v1h-1zM632 620h1v1h-1zM569 621h1v1h-1zM632 621h1v1h-1zM569 622h1v1h-1zM632 622h1v1h-1zM569 623h1v1h-1zM632 623h1v1h-1zM569 624h1v1h-1zM632 624h1v1h-1zM569 625h1v1h-1zM632 625h1v1h-1zM569 626h1v1h-1zM632 626h1v1h-1zM560 627h10v1h-10zM632 627h1v1h-1zM569 628h1v1h-1zM569 629h1v1h-1zM569 630h1v1h-1zM569 631h1v1h-1zM569 632h1v1h-1zM569 633h1v1h-1zM569 634h1v1h-1zM569 635h1v1h-1zM569 636h1v1h-1zM569 637h2v1h-2zM569 638h1v1h-1zM571 638h1v1h-1zM569 639h1v1h-1zM572 639h2v1h-2zM569 640h1v1h-1zM574 640h1v1h-1zM569 641h1v1h-1zM575 641h2v1h-2zM569 642h1v1h-1zM577 642h1v1h-1zM569 643h1v1h-1zM578 643h2v1h-2zM585 643h1v1h-1zM569 644h1v1h-1zM580 644h1v1h-1zM584 644h2v1h-2zM569 645h1v1h-1zM581 645h3v1h-3zM586 645h1v1h-1zM569 646h1v1h-1zM582 646h2v1h-2zM587 646h1v1h-1zM581 647h1v1h-1zM588 647h1v1h-1zM581 648h1v1h-1zM589 648h1v1h-1zM582 649h2v1h-2zM590 649h1v1h-1zM584 650h2v1h-2zM591 650h1v1h-1zM586 651h2v1h-2zM592 651h1v1h-1zM588 652h3v1h-3zM593 652h1v1h-1zM591 653h2v1h-2zM594 653h1v1h-1zM593 654h3v1h-3zM741 654h1v1h-1zM595 655h2v1h-2zM741 655h1v1h-1zM741 656h1v1h-1zM741 657h1v1h-1zM741 658h1v1h-1zM735 659h11v1h-11zM732 660h3v1h-3zM746 660h3v1h-3zM731 661h1v1h-1zM741 661h1v1h-1zM749 661h2v1h-2zM730 662h1v1h-1zM741 662h1v1h-1zM751 662h1v1h-1zM729 663h1v1h-1zM741 663h1v1h-1zM752 663h1v1h-1zM728 664h1v1h-1zM741 664h1v1h-1zM753 664h1v1h-1zM727 665h1v1h-1zM741 665h1v1h-1zM754 665h1v1h-1zM726 666h1v1h-1zM736 666h11v1h-11zM755 666h1v1h-1zM725 667h1v1h-1zM741 667h1v1h-1zM756 667h1v1h-1zM725 668h1v1h-1zM741 668h1v1h-1zM757 668h1v1h-1zM724 669h1v1h-1zM741 669h1v1h-1zM757 669h1v1h-1zM724 670h1v1h-1zM741 670h1v1h-1zM758 670h1v1h-1zM723 671h1v1h-1zM758 671h1v1h-1zM723 672h1v1h-1zM758 672h1v1h-1zM723 673h1v1h-1zM758 673h1v1h-1zM722 674h1v1h-1zM759 674h1v1h-1zM722 675h1v1h-1zM759 675h1v1h-1zM722 676h1v1h-1zM759 676h1v1h-1zM722 677h1v1h-1zM759 677h1v1h-1zM722 678h1v1h-1zM759 678h1v1h-1zM722 679h1v1h-1zM758 679h1v1h-1zM723 680h1v1h-1zM758 680h1v1h-1zM723 681h1v1h-1zM758 681h1v1h-1zM596 682h1v1h-1zM669 682h1v1h-1zM723 682h1v1h-1zM757 682h1v1h-1zM595 683h1v1h-1zM669 683h1v1h-1zM724 683h1v1h-1zM757 683h1v1h-1zM593 684h2v1h-2zM669 684h1v1h-1zM724 684h1v1h-1zM757 684h1v1h-1zM592 685h1v1h-1zM669 685h1v1h-1zM725 685h1v1h-1zM756 685h1v1h-1zM590 686h2v1h-2zM669 686h1v1h-1zM725 686h1v1h-1zM755 686h1v1h-1zM589 687h1v1h-1zM669 687h1v1h-1zM726 687h1v1h-1zM754 687h1v1h-1zM587 688h2v1h-2zM669 688h1v1h-1zM727 688h1v1h-1zM736 688h11v1h-11zM754 688h1v1h-1zM586 689h1v1h-1zM669 689h1v1h-1zM728 689h2v1h-2zM753 689h1v1h-1zM584 690h2v1h-2zM669 690h1v1h-1zM730 690h1v1h-1zM752 690h1v1h-1zM569 691h1v1h-1zM583 691h1v1h-1zM669 691h1v1h-1zM731 691h2v1h-2zM750 691h2v1h-2zM569 692h1v1h-1zM581 692h2v1h-2zM669 692h1v1h-1zM733 692h2v1h-2zM748 692h2v1h-2zM569 693h1v1h-1zM580 693h1v1h-1zM669 693h1v1h-1zM735 693h3v1h-3zM745 693h3v1h-3zM569 694h1v1h-1zM579 694h1v1h-1zM669 694h1v1h-1zM738 694h7v1h-7zM569 695h1v1h-1zM577 695h2v1h-2zM669 695h1v1h-1zM741 695h1v1h-1zM569 696h1v1h-1zM576 696h1v1h-1zM669 696h1v1h-1zM741 696h1v1h-1zM569 697h1v1h-1zM574 697h2v1h-2zM669 697h1v1h-1zM741 697h1v1h-1zM569 698h1v1h-1zM573 698h1v1h-1zM660 698h19v1h-19zM741 698h1v1h-1zM569 699h1v1h-1zM571 699h2v1h-2zM741 699h1v1h-1zM523 700h1v1h-1zM542 700h1v1h-1zM569 700h2v1h-2zM741 700h1v1h-1zM523 701h2v1h-2zM541 701h2v1h-2zM569 701h1v1h-1zM522 702h1v1h-1zM525 702h1v1h-1zM541 702h1v1h-1zM543 702h1v1h-1zM569 702h1v1h-1zM660 702h19v1h-19zM522 703h1v1h-1zM525 703h1v1h-1zM540 703h1v1h-1zM543 703h1v1h-1zM569 703h1v1h-1zM669 703h1v1h-1zM521 704h1v1h-1zM526 704h1v1h-1zM540 704h1v1h-1zM544 704h1v1h-1zM569 704h1v1h-1zM669 704h1v1h-1zM521 705h1v1h-1zM526 705h1v1h-1zM539 705h1v1h-1zM544 705h1v1h-1zM569 705h1v1h-1zM669 705h1v1h-1zM520 706h1v1h-1zM527 706h1v1h-1zM539 706h1v1h-1zM545 706h1v1h-1zM569 706h1v1h-1zM669 706h1v1h-1zM520 707h1v1h-1zM527 707h1v1h-1zM538 707h1v1h-1zM545 707h1v1h-1zM569 707h1v1h-1zM669 707h1v1h-1zM519 708h1v1h-1zM528 708h1v1h-1zM538 708h1v1h-1zM546 708h1v1h-1zM569 708h1v1h-1zM669 708h1v1h-1zM514 709h6v1h-6zM528 709h1v1h-1zM537 709h1v1h-1zM546 709h1v1h-1zM555 709h15v1h-15zM669 709h1v1h-1zM529 710h1v1h-1zM537 710h1v1h-1zM547 710h1v1h-1zM555 710h1v1h-1zM569 710h1v1h-1zM669 710h1v1h-1zM529 711h1v1h-1zM536 711h1v1h-1zM547 711h1v1h-1zM554 711h1v1h-1zM569 711h1v1h-1zM669 711h1v1h-1zM530 712h1v1h-1zM536 712h1v1h-1zM548 712h1v1h-1zM554 712h1v1h-1zM569 712h1v1h-1zM669 712h1v1h-1zM530 713h1v1h-1zM535 713h1v1h-1zM548 713h1v1h-1zM553 713h1v1h-1zM569 713h1v1h-1zM669 713h1v1h-1zM531 714h1v1h-1zM535 714h1v1h-1zM549 714h1v1h-1zM553 714h1v1h-1zM569 714h1v1h-1zM669 714h1v1h-1zM531 715h1v1h-1zM534 715h1v1h-1zM549 715h1v1h-1zM552 715h1v1h-1zM569 715h1v1h-1zM669 715h1v1h-1zM532 716h1v1h-1zM534 716h1v1h-1zM550 716h1v1h-1zM552 716h1v1h-1zM569 716h1v1h-1zM669 716h1v1h-1zM532 717h2v1h-2zM550 717h2v1h-2zM569 717h1v1h-1zM669 717h1v1h-1zM451 718h1v1h-1zM532 718h1v1h-1zM551 718h1v1h-1zM569 718h1v1h-1zM632 718h1v1h-1zM669 718h1v1h-1zM451 719h1v1h-1zM569 719h2v1h-2zM632 719h1v1h-1zM451 720h1v1h-1zM569 720h1v1h-1zM571 720h1v1h-1zM632 720h1v1h-1zM451 721h1v1h-1zM569 721h1v1h-1zM572 721h2v1h-2zM632 721h1v1h-1zM449 722h3v1h-3zM569 722h1v1h-1zM574 722h1v1h-1zM632 722h1v1h-1zM444 723h5v1h-5zM451 723h6v1h-6zM569 723h1v1h-1zM575 723h2v1h-2zM632 723h2v1h-2zM442 724h2v1h-2zM457 724h2v1h-2zM569 724h1v1h-1zM577 724h1v1h-1zM634 724h2v1h-2zM441 725h1v1h-1zM451 725h1v1h-1zM459 725h2v1h-2zM569 725h1v1h-1zM578 725h2v1h-2zM585 725h1v1h-1zM636 725h2v1h-2zM440 726h1v1h-1zM451 726h1v1h-1zM461 726h1v1h-1zM569 726h1v1h-1zM580 726h1v1h-1zM584 726h2v1h-2zM638 726h2v1h-2zM439 727h1v1h-1zM451 727h1v1h-1zM462 727h1v1h-1zM569 727h1v1h-1zM581 727h3v1h-3zM586 727h1v1h-1zM640 727h2v1h-2zM438 728h1v1h-1zM451 728h1v1h-1zM463 728h1v1h-1zM569 728h1v1h-1zM582 728h2v1h-2zM587 728h1v1h-1zM639 728h2v1h-2zM437 729h1v1h-1zM451 729h1v1h-1zM464 729h1v1h-1zM581 729h1v1h-1zM588 729h1v1h-1zM637 729h2v1h-2zM436 730h1v1h-1zM446 730h11v1h-11zM465 730h1v1h-1zM581 730h1v1h-1zM589 730h1v1h-1zM635 730h2v1h-2zM435 731h1v1h-1zM451 731h1v1h-1zM466 731h1v1h-1zM582 731h2v1h-2zM590 731h1v1h-1zM633 731h2v1h-2zM435 732h1v1h-1zM451 732h1v1h-1zM467 732h1v1h-1zM584 732h2v1h-2zM591 732h1v1h-1zM631 732h2v1h-2zM434 733h1v1h-1zM451 733h1v1h-1zM467 733h1v1h-1zM586 733h2v1h-2zM592 733h1v1h-1zM629 733h2v1h-2zM434 734h1v1h-1zM451 734h1v1h-1zM468 734h1v1h-1zM588 734h3v1h-3zM593 734h1v1h-1zM627 734h2v1h-2zM433 735h1v1h-1zM468 735h1v1h-1zM591 735h2v1h-2zM594 735h1v1h-1zM625 735h2v1h-2zM433 736h1v1h-1zM468 736h1v1h-1zM593 736h3v1h-3zM623 736h2v1h-2zM433 737h1v1h-1zM469 737h1v1h-1zM595 737h2v1h-2zM624 737h1v1h-1zM432 738h1v1h-1zM469 738h1v1h-1zM625 738h2v1h-2zM432 739h1v1h-1zM469 739h1v1h-1zM627 739h2v1h-2zM432 740h1v1h-1zM469 740h1v1h-1zM629 740h2v1h-2zM432 741h1v1h-1zM469 741h1v1h-1zM631 741h2v1h-2zM432 742h1v1h-1zM469 742h1v1h-1zM633 742h2v1h-2zM432 743h1v1h-1zM468 743h1v1h-1zM635 743h2v1h-2zM433 744h1v1h-1zM468 744h1v1h-1zM637 744h2v1h-2zM433 745h1v1h-1zM468 745h1v1h-1zM639 745h3v1h-3zM433 746h1v1h-1zM467 746h1v1h-1zM640 746h1v1h-1zM669 746h4v1h-4zM434 747h1v1h-1zM467 747h1v1h-1zM638 747h2v1h-2zM673 747h2v1h-2zM434 748h1v1h-1zM466 748h1v1h-1zM636 748h2v1h-2zM675 748h1v1h-1zM435 749h1v1h-1zM466 749h1v1h-1zM634 749h2v1h-2zM676 749h1v1h-1zM436 750h1v1h-1zM465 750h1v1h-1zM632 750h2v1h-2zM677 750h1v1h-1zM437 751h1v1h-1zM464 751h1v1h-1zM630 751h2v1h-2zM678 751h1v1h-1zM438 752h1v1h-1zM446 752h11v1h-11zM463 752h1v1h-1zM628 752h2v1h-2zM678 752h1v1h-1zM439 753h1v1h-1zM462 753h1v1h-1zM626 753h2v1h-2zM678 753h1v1h-1zM440 754h1v1h-1zM461 754h1v1h-1zM624 754h2v1h-2zM678 754h1v1h-1zM441 755h2v1h-2zM460 755h1v1h-1zM623 755h2v1h-2zM678 755h1v1h-1zM443 756h2v1h-2zM458 756h2v1h-2zM625 756h2v1h-2zM678 756h1v1h-1zM445 757h4v1h-4zM454 757h4v1h-4zM627 757h2v1h-2zM678 757h1v1h-1zM449 758h5v1h-5zM629 758h2v1h-2zM677 758h1v1h-1zM451 759h1v1h-1zM631 759h2v1h-2zM666 759h7v1h-7zM677 759h1v1h-1zM451 760h1v1h-1zM632 760h1v1h-1zM664 760h2v1h-2zM673 760h2v1h-2zM676 760h1v1h-1zM451 761h1v1h-1zM632 761h1v1h-1zM663 761h1v1h-1zM675 761h1v1h-1zM451 762h1v1h-1zM632 762h1v1h-1zM662 762h1v1h-1zM673 762h2v1h-2zM676 762h1v1h-1zM451 763h1v1h-1zM632 763h1v1h-1zM663 763h3v1h-3zM671 763h2v1h-2zM677 763h1v1h-1zM451 764h1v1h-1zM632 764h1v1h-1zM666 764h5v1h-5zM677 764h1v1h-1zM632 765h1v1h-1zM678 765h1v1h-1zM632 766h1v1h-1zM678 766h1v1h-1zM632 767h1v1h-1zM678 767h1v1h-1zM632 768h1v1h-1zM678 768h1v1h-1zM632 769h1v1h-1zM678 769h1v1h-1zM632 770h1v1h-1zM677 770h1v1h-1zM632 771h1v1h-1zM677 771h1v1h-1zM632 772h1v1h-1zM668 772h2v1h-2zM676 772h1v1h-1zM632 773h1v1h-1zM665 773h3v1h-3zM670 773h3v1h-3zM675 773h1v1h-1zM632 774h1v1h-1zM663 774h2v1h-2zM673 774h2v1h-2zM623 775h19v1h-19zM662 775h1v1h-1zM672 775h2v1h-2zM675 775h1v1h-1zM623 776h1v1h-1zM640 776h1v1h-1zM663 776h1v1h-1zM671 776h1v1h-1zM676 776h1v1h-1zM624 777h1v1h-1zM640 777h1v1h-1zM664 777h7v1h-7zM677 777h1v1h-1zM625 778h1v1h-1zM639 778h1v1h-1zM677 778h1v1h-1zM625 779h1v1h-1zM638 779h1v1h-1zM678 779h1v1h-1zM626 780h1v1h-1zM638 780h1v1h-1zM678 780h1v1h-1zM626 781h1v1h-1zM637 781h1v1h-1zM678 781h1v1h-1zM627 782h1v1h-1zM636 782h1v1h-1zM678 782h1v1h-1zM628 783h1v1h-1zM636 783h1v1h-1zM678 783h1v1h-1zM628 784h1v1h-1zM635 784h1v1h-1zM677 784h1v1h-1zM629 785h1v1h-1zM634 785h1v1h-1zM677 785h1v1h-1zM630 786h1v1h-1zM634 786h1v1h-1zM676 786h1v1h-1zM631 787h1v1h-1zM633 787h1v1h-1zM676 787h1v1h-1zM631 788h2v1h-2zM675 788h1v1h-1zM623 789h19v1h-19zM674 789h1v1h-1zM632 790h1v1h-1zM672 790h2v1h-2zM632 791h1v1h-1zM669 791h3v1h-3zM632 792h1v1h-1zM632 793h1v1h-1zM632 794h1v1h-1zM632 795h1v1h-1zM632 796h1v1h-1zM632 797h1v1h-1zM632 798h1v1h-1zM632 799h1v1h-1zM632 800h1v1h-1z"/>
<text x="591.3" y="477.1" font-size="12" font-weight="bold" fill="#000">Q4</text>
<text x="591.3" y="498.1" font-size="12" font-weight="bold" fill="#000" textLength="37.4" lengthAdjust="spacingAndGlyphs">ztx415</text>
<text x="591.3" y="549.8" font-size="12" font-weight="bold" fill="#000">Q3</text>
<text x="591.3" y="570.8" font-size="12" font-weight="bold" fill="#000" textLength="37.4" lengthAdjust="spacingAndGlyphs">ztx415</text>
<text x="591.3" y="622.7" font-size="12" font-weight="bold" fill="#000">Q2</text>
<text x="591.3" y="643.7" font-size="12" font-weight="bold" fill="#000" textLength="37.4" lengthAdjust="spacingAndGlyphs">ztx415</text>
<text x="591.3" y="704.7" font-size="12" font-weight="bold" fill="#000">Q1</text>
<text x="591.3" y="725.7" font-size="12" font-weight="bold" fill="#000" textLength="37.4" lengthAdjust="spacingAndGlyphs">ztx415</text>
<text x="637" y="599.9" font-size="12" font-weight="bold" fill="#000">C2</text>
<text x="637.6" y="627.8" font-size="12" font-weight="bold" fill="#000" textLength="34" lengthAdjust="spacingAndGlyphs">1000p</text>
<text x="701.9" y="587.7" font-size="12" font-weight="bold" fill="#000">R2</text>
<text x="700" y="620.7" font-size="12" font-weight="bold" fill="#000">10k</text>
<text x="755.4" y="659.4" font-size="12" font-weight="bold" fill="#000">V1</text>
<text x="755.4" y="704.5" font-size="12" font-weight="bold" fill="#000" textLength="27" lengthAdjust="spacingAndGlyphs">1000</text>
<text x="673.2" y="690.8" font-size="12" font-weight="bold" fill="#000">C1</text>
<text x="673.4" y="718.4" font-size="12" font-weight="bold" fill="#000" textLength="34" lengthAdjust="spacingAndGlyphs">1000p</text>
<text x="644.6" y="736.6" font-size="12" font-weight="bold" fill="#000">R3</text>
<text x="644.6" y="756.4" font-size="12" font-weight="bold" fill="#000">40</text>
<text x="637.4" y="768.6" font-size="12" font-weight="bold" fill="#000">D1</text>
<text x="637.4" y="804.6" font-size="12" font-weight="bold" fill="#000" textLength="60" lengthAdjust="spacingAndGlyphs">DI_1N5408</text>
<text x="680.6" y="763.6" font-size="12" font-weight="bold" fill="#000">L1</text>
<text x="680.6" y="786.4" font-size="12" font-weight="bold" fill="#000">2.7µ</text>
<text x="529.5" y="696.6" font-size="12" font-weight="bold" fill="#000">R1</text>
<text x="530.7" y="729.4" font-size="12" font-weight="bold" fill="#000">50</text>
<text x="464.1" y="722.7" font-size="12" font-weight="bold" fill="#000">V2</text>
<text x="403.6" y="679.8" font-size="12" font-weight="bold" fill="#000" textLength="116.3" lengthAdjust="spacingAndGlyphs">PULSE(0 5 1u 0 0 1u)</text>
<text x="405.3" y="704.7" font-size="12" font-weight="bold" fill="#0000ff" textLength="43.9" lengthAdjust="spacingAndGlyphs">V(n006)</text>
<text x="432.1" y="804.9" font-size="12" font-weight="bold" fill="#000" textLength="42.5" lengthAdjust="spacingAndGlyphs">.tran 2u</text>
<text x="492.3" y="804.9" font-size="12" font-weight="bold" fill="#000" textLength="85.7" lengthAdjust="spacingAndGlyphs">.lib ztx415v3.lib</text>
<path shape-rendering="crispEdges" fill="#0000ff" stroke="none" d="M596 454h74v1h-74zM669 455h1v1h-1zM669 456h1v1h-1zM669 457h1v1h-1zM669 458h1v1h-1zM669 459h1v1h-1zM669 460h1v1h-1zM669 461h1v1h-1zM669 462h1v1h-1zM669 463h1v1h-1zM669 464h1v1h-1zM669 465h1v1h-1zM669 466h1v1h-1zM669 467h1v1h-1zM669 468h1v1h-1zM669 469h1v1h-1zM669 470h1v1h-1zM669 471h1v1h-1zM669 472h1v1h-1zM669 473h1v1h-1zM669 474h1v1h-1zM669 475h1v1h-1zM669 476h1v1h-1zM669 477h1v1h-1zM669 478h1v1h-1zM669 479h1v1h-1zM669 480h1v1h-1zM669 481h1v1h-1zM560 482h1v1h-1zM669 482h1v1h-1zM560 483h1v1h-1zM669 483h1v1h-1zM560 484h1v1h-1zM669 484h1v1h-1zM560 485h1v1h-1zM669 485h1v1h-1zM560 486h1v1h-1zM669 486h1v1h-1zM560 487h1v1h-1zM669 487h1v1h-1zM560 488h1v1h-1zM669 488h1v1h-1zM560 489h1v1h-1zM669 489h1v1h-1zM560 490h1v1h-1zM669 490h1v1h-1zM560 491h1v1h-1zM669 491h1v1h-1zM560 492h1v1h-1zM669 492h1v1h-1zM560 493h1v1h-1zM669 493h1v1h-1zM560 494h1v1h-1zM669 494h1v1h-1zM560 495h1v1h-1zM669 495h1v1h-1zM560 496h1v1h-1zM669 496h1v1h-1zM560 497h1v1h-1zM669 497h1v1h-1zM560 498h1v1h-1zM669 498h1v1h-1zM560 499h1v1h-1zM669 499h1v1h-1zM560 500h1v1h-1zM669 500h1v1h-1zM560 501h1v1h-1zM669 501h1v1h-1zM560 502h1v1h-1zM669 502h1v1h-1zM560 503h1v1h-1zM669 503h1v1h-1zM560 504h1v1h-1zM669 504h1v1h-1zM560 505h1v1h-1zM669 505h1v1h-1zM560 506h1v1h-1zM669 506h1v1h-1zM560 507h1v1h-1zM669 507h1v1h-1zM560 508h1v1h-1zM669 508h1v1h-1zM560 509h1v1h-1zM596 509h1v1h-1zM669 509h1v1h-1zM560 510h1v1h-1zM596 510h1v1h-1zM669 510h1v1h-1zM560 511h1v1h-1zM596 511h1v1h-1zM669 511h1v1h-1zM560 512h1v1h-1zM596 512h1v1h-1zM669 512h1v1h-1zM560 513h1v1h-1zM596 513h1v1h-1zM669 513h1v1h-1zM560 514h1v1h-1zM596 514h1v1h-1zM669 514h1v1h-1zM560 515h1v1h-1zM596 515h1v1h-1zM669 515h1v1h-1zM560 516h1v1h-1zM596 516h1v1h-1zM669 516h1v1h-1zM560 517h1v1h-1zM596 517h1v1h-1zM669 517h1v1h-1zM560 518h37v1h-37zM669 518h1v1h-1zM596 519h1v1h-1zM669 519h1v1h-1zM596 520h1v1h-1zM669 520h1v1h-1zM596 521h1v1h-1zM669 521h1v1h-1zM596 522h1v1h-1zM669 522h1v1h-1zM596 523h1v1h-1zM669 523h1v1h-1zM596 524h1v1h-1zM669 524h1v1h-1zM596 525h1v1h-1zM669 525h1v1h-1zM596 526h1v1h-1zM669 526h1v1h-1zM596 527h1v1h-1zM669 527h1v1h-1zM669 528h1v1h-1zM669 529h1v1h-1zM669 530h1v1h-1zM669 531h1v1h-1zM669 532h1v1h-1zM669 533h1v1h-1zM669 534h1v1h-1zM669 535h1v1h-1zM669 536h1v1h-1zM669 537h1v1h-1zM669 538h1v1h-1zM669 539h1v1h-1zM669 540h1v1h-1zM669 541h1v1h-1zM669 542h1v1h-1zM669 543h1v1h-1zM669 544h1v1h-1zM669 545h1v1h-1zM669 546h1v1h-1zM669 547h1v1h-1zM669 548h1v1h-1zM669 549h1v1h-1zM669 550h1v1h-1zM669 551h1v1h-1zM669 552h1v1h-1zM669 553h1v1h-1zM669 554h1v1h-1zM560 555h1v1h-1zM669 555h1v1h-1zM560 556h1v1h-1zM669 556h1v1h-1zM560 557h1v1h-1zM669 557h1v1h-1zM560 558h1v1h-1zM669 558h1v1h-1zM560 559h1v1h-1zM669 559h1v1h-1zM560 560h1v1h-1zM669 560h1v1h-1zM560 561h1v1h-1zM669 561h1v1h-1zM560 562h1v1h-1zM669 562h1v1h-1zM560 563h1v1h-1zM669 563h1v1h-1zM560 564h1v1h-1zM669 564h1v1h-1zM560 565h1v1h-1zM669 565h1v1h-1zM560 566h1v1h-1zM669 566h1v1h-1zM560 567h1v1h-1zM669 567h1v1h-1zM560 568h1v1h-1zM669 568h1v1h-1zM560 569h1v1h-1zM669 569h1v1h-1zM560 570h1v1h-1zM669 570h1v1h-1zM560 571h1v1h-1zM669 571h1v1h-1zM560 572h1v1h-1zM669 572h1v1h-1zM560 573h1v1h-1zM669 573h1v1h-1zM560 574h1v1h-1zM669 574h1v1h-1zM560 575h1v1h-1zM669 575h1v1h-1zM560 576h1v1h-1zM669 576h1v1h-1zM560 577h1v1h-1zM669 577h1v1h-1zM560 578h1v1h-1zM669 578h1v1h-1zM560 579h1v1h-1zM669 579h1v1h-1zM560 580h1v1h-1zM669 580h1v1h-1zM560 581h1v1h-1zM669 581h1v1h-1zM560 582h1v1h-1zM596 582h1v1h-1zM669 582h1v1h-1zM560 583h1v1h-1zM596 583h1v1h-1zM669 583h1v1h-1zM560 584h1v1h-1zM596 584h1v1h-1zM669 584h1v1h-1zM560 585h1v1h-1zM596 585h1v1h-1zM669 585h1v1h-1zM560 586h1v1h-1zM596 586h1v1h-1zM669 586h1v1h-1zM560 587h1v1h-1zM596 587h1v1h-1zM669 587h1v1h-1zM560 588h1v1h-1zM596 588h1v1h-1zM669 588h1v1h-1zM560 589h1v1h-1zM596 589h1v1h-1zM669 589h1v1h-1zM560 590h1v1h-1zM596 590h1v1h-1zM669 590h1v1h-1zM560 591h73v1h-73zM669 591h1v1h-1zM596 592h1v1h-1zM669 592h1v1h-1zM596 593h1v1h-1zM669 593h1v1h-1zM596 594h1v1h-1zM669 594h1v1h-1zM596 595h1v1h-1zM669 595h1v1h-1zM596 596h1v1h-1zM669 596h1v1h-1zM596 597h1v1h-1zM669 597h1v1h-1zM596 598h1v1h-1zM669 598h1v1h-1zM596 599h1v1h-1zM669 599h1v1h-1zM596 600h1v1h-1zM669 600h19v1h-19zM732 600h10v1h-10zM669 601h1v1h-1zM741 601h1v1h-1zM669 602h1v1h-1zM741 602h1v1h-1zM669 603h1v1h-1zM741 603h1v1h-1zM669 604h1v1h-1zM741 604h1v1h-1zM669 605h1v1h-1zM741 605h1v1h-1zM669 606h1v1h-1zM741 606h1v1h-1zM669 607h1v1h-1zM741 607h1v1h-1zM669 608h1v1h-1zM741 608h1v1h-1zM669 609h1v1h-1zM741 609h1v1h-1zM669 610h1v1h-1zM741 610h1v1h-1zM669 611h1v1h-1zM741 611h1v1h-1zM669 612h1v1h-1zM741 612h1v1h-1zM669 613h1v1h-1zM741 613h1v1h-1zM669 614h1v1h-1zM741 614h1v1h-1zM669 615h1v1h-1zM741 615h1v1h-1zM669 616h1v1h-1zM741 616h1v1h-1zM669 617h1v1h-1zM741 617h1v1h-1zM669 618h1v1h-1zM741 618h1v1h-1zM669 619h1v1h-1zM741 619h1v1h-1zM669 620h1v1h-1zM741 620h1v1h-1zM669 621h1v1h-1zM741 621h1v1h-1zM669 622h1v1h-1zM741 622h1v1h-1zM669 623h1v1h-1zM741 623h1v1h-1zM669 624h1v1h-1zM741 624h1v1h-1zM669 625h1v1h-1zM741 625h1v1h-1zM669 626h1v1h-1zM741 626h1v1h-1zM560 627h1v1h-1zM622 627h21v1h-21zM669 627h1v1h-1zM741 627h1v1h-1zM560 628h1v1h-1zM622 628h1v1h-1zM641 628h1v1h-1zM669 628h1v1h-1zM741 628h1v1h-1zM560 629h1v1h-1zM623 629h1v1h-1zM640 629h1v1h-1zM669 629h1v1h-1zM741 629h1v1h-1zM560 630h1v1h-1zM624 630h1v1h-1zM639 630h1v1h-1zM669 630h1v1h-1zM741 630h1v1h-1zM560 631h1v1h-1zM625 631h1v1h-1zM638 631h1v1h-1zM669 631h1v1h-1zM741 631h1v1h-1zM560 632h1v1h-1zM626 632h1v1h-1zM637 632h1v1h-1zM669 632h1v1h-1zM741 632h1v1h-1zM560 633h1v1h-1zM627 633h1v1h-1zM636 633h1v1h-1zM669 633h1v1h-1zM741 633h1v1h-1zM560 634h1v1h-1zM628 634h1v1h-1zM635 634h1v1h-1zM669 634h1v1h-1zM741 634h1v1h-1zM560 635h1v1h-1zM629 635h1v1h-1zM634 635h1v1h-1zM669 635h1v1h-1zM741 635h1v1h-1zM560 636h1v1h-1zM630 636h1v1h-1zM634 636h1v1h-1zM669 636h1v1h-1zM741 636h1v1h-1zM560 637h1v1h-1zM631 637h1v1h-1zM633 637h1v1h-1zM669 637h1v1h-1zM741 637h1v1h-1zM560 638h1v1h-1zM632 638h1v1h-1zM669 638h1v1h-1zM741 638h1v1h-1zM560 639h1v1h-1zM669 639h1v1h-1zM741 639h1v1h-1zM560 640h1v1h-1zM669 640h1v1h-1zM741 640h1v1h-1zM560 641h1v1h-1zM669 641h1v1h-1zM741 641h1v1h-1zM560 642h1v1h-1zM669 642h1v1h-1zM741 642h1v1h-1zM560 643h1v1h-1zM669 643h1v1h-1zM741 643h1v1h-1zM560 644h1v1h-1zM669 644h1v1h-1zM741 644h1v1h-1zM560 645h1v1h-1zM669 645h1v1h-1zM741 645h1v1h-1zM560 646h1v1h-1zM669 646h1v1h-1zM741 646h1v1h-1zM560 647h1v1h-1zM669 647h1v1h-1zM741 647h1v1h-1zM560 648h1v1h-1zM669 648h1v1h-1zM741 648h1v1h-1zM560 649h1v1h-1zM669 649h1v1h-1zM741 649h1v1h-1zM560 650h1v1h-1zM669 650h1v1h-1zM741 650h1v1h-1zM560 651h1v1h-1zM669 651h1v1h-1zM741 651h1v1h-1zM560 652h1v1h-1zM669 652h1v1h-1zM741 652h1v1h-1zM560 653h1v1h-1zM669 653h1v1h-1zM741 653h1v1h-1zM560 654h1v1h-1zM669 654h1v1h-1zM741 654h1v1h-1zM560 655h1v1h-1zM596 655h1v1h-1zM669 655h1v1h-1zM560 656h1v1h-1zM596 656h1v1h-1zM669 656h1v1h-1zM560 657h1v1h-1zM596 657h1v1h-1zM669 657h1v1h-1zM560 658h1v1h-1zM596 658h1v1h-1zM669 658h1v1h-1zM560 659h1v1h-1zM596 659h1v1h-1zM669 659h1v1h-1zM560 660h1v1h-1zM596 660h1v1h-1zM669 660h1v1h-1zM560 661h1v1h-1zM596 661h1v1h-1zM669 661h1v1h-1zM560 662h1v1h-1zM596 662h1v1h-1zM669 662h1v1h-1zM560 663h1v1h-1zM596 663h1v1h-1zM669 663h1v1h-1zM560 664h1v1h-1zM596 664h1v1h-1zM669 664h1v1h-1zM560 665h1v1h-1zM596 665h1v1h-1zM669 665h1v1h-1zM560 666h1v1h-1zM596 666h1v1h-1zM669 666h1v1h-1zM560 667h1v1h-1zM596 667h1v1h-1zM669 667h1v1h-1zM560 668h1v1h-1zM596 668h1v1h-1zM669 668h1v1h-1zM560 669h1v1h-1zM596 669h1v1h-1zM669 669h1v1h-1zM560 670h1v1h-1zM596 670h1v1h-1zM669 670h1v1h-1zM560 671h1v1h-1zM596 671h1v1h-1zM669 671h1v1h-1zM560 672h1v1h-1zM596 672h1v1h-1zM669 672h1v1h-1zM560 673h37v1h-37zM669 673h1v1h-1zM596 674h1v1h-1zM669 674h1v1h-1zM596 675h1v1h-1zM669 675h1v1h-1zM596 676h1v1h-1zM669 676h1v1h-1zM596 677h1v1h-1zM669 677h1v1h-1zM596 678h1v1h-1zM669 678h1v1h-1zM596 679h1v1h-1zM669 679h1v1h-1zM596 680h1v1h-1zM669 680h1v1h-1zM596 681h1v1h-1zM669 681h1v1h-1zM596 682h1v1h-1zM669 682h1v1h-1zM669 683h1v1h-1zM669 684h1v1h-1zM669 685h1v1h-1zM669 686h1v1h-1zM669 687h1v1h-1zM669 688h1v1h-1zM669 689h1v1h-1zM669 690h1v1h-1zM669 691h1v1h-1zM731 700h21v1h-21zM732 701h1v1h-1zM750 701h1v1h-1zM733 702h1v1h-1zM749 702h1v1h-1zM734 703h1v1h-1zM748 703h1v1h-1zM735 704h1v1h-1zM747 704h1v1h-1zM736 705h1v1h-1zM746 705h1v1h-1zM737 706h1v1h-1zM745 706h1v1h-1zM738 707h1v1h-1zM744 707h1v1h-1zM739 708h1v1h-1zM743 708h1v1h-1zM451 709h64v1h-64zM740 709h1v1h-1zM742 709h1v1h-1zM451 710h1v1h-1zM741 710h1v1h-1zM451 711h1v1h-1zM451 712h1v1h-1zM451 713h1v1h-1zM451 714h1v1h-1zM451 715h1v1h-1zM451 716h1v1h-1zM451 717h1v1h-1zM451 718h1v1h-1zM632 718h38v1h-38zM669 719h1v1h-1zM669 720h1v1h-1zM669 721h1v1h-1zM669 722h1v1h-1zM669 723h1v1h-1zM669 724h1v1h-1zM669 725h1v1h-1zM669 726h1v1h-1zM669 727h1v1h-1zM669 728h1v1h-1zM669 729h1v1h-1zM669 730h1v1h-1zM669 731h1v1h-1zM669 732h1v1h-1zM669 733h1v1h-1zM669 734h1v1h-1zM669 735h1v1h-1zM669 736h1v1h-1zM596 737h1v1h-1zM669 737h1v1h-1zM596 738h1v1h-1zM669 738h1v1h-1zM596 739h1v1h-1zM669 739h1v1h-1zM596 740h1v1h-1zM669 740h1v1h-1zM596 741h1v1h-1zM669 741h1v1h-1zM596 742h1v1h-1zM669 742h1v1h-1zM596 743h1v1h-1zM669 743h1v1h-1zM596 744h1v1h-1zM669 744h1v1h-1zM596 745h1v1h-1zM669 745h1v1h-1zM596 746h1v1h-1zM669 746h1v1h-1zM596 747h1v1h-1zM596 748h1v1h-1zM596 749h1v1h-1zM596 750h1v1h-1zM596 751h1v1h-1zM596 752h1v1h-1zM596 753h1v1h-1zM596 754h1v1h-1zM596 755h1v1h-1zM596 756h1v1h-1zM596 757h1v1h-1zM596 758h1v1h-1zM596 759h1v1h-1zM596 760h1v1h-1zM596 761h1v1h-1zM596 762h1v1h-1zM596 763h1v1h-1zM441 764h21v1h-21zM596 764h1v1h-1zM442 765h1v1h-1zM460 765h1v1h-1zM596 765h1v1h-1zM443 766h1v1h-1zM459 766h1v1h-1zM596 766h1v1h-1zM444 767h1v1h-1zM458 767h1v1h-1zM596 767h1v1h-1zM445 768h1v1h-1zM457 768h1v1h-1zM596 768h1v1h-1zM446 769h1v1h-1zM456 769h1v1h-1zM596 769h1v1h-1zM447 770h1v1h-1zM455 770h1v1h-1zM596 770h1v1h-1zM448 771h1v1h-1zM454 771h1v1h-1zM596 771h1v1h-1zM449 772h1v1h-1zM453 772h1v1h-1zM596 772h1v1h-1zM450 773h1v1h-1zM452 773h1v1h-1zM596 773h1v1h-1zM451 774h1v1h-1zM596 774h1v1h-1zM596 775h1v1h-1zM596 776h1v1h-1zM596 777h1v1h-1zM596 778h1v1h-1zM596 779h1v1h-1zM596 780h1v1h-1zM596 781h1v1h-1zM596 782h1v1h-1zM596 783h1v1h-1zM596 784h1v1h-1zM596 785h1v1h-1zM596 786h1v1h-1zM596 787h1v1h-1zM596 788h1v1h-1zM596 789h1v1h-1zM596 790h1v1h-1zM596 791h1v1h-1zM669 791h1v1h-1zM596 792h1v1h-1zM669 792h1v1h-1zM596 793h1v1h-1zM669 793h1v1h-1zM596 794h1v1h-1zM669 794h1v1h-1zM596 795h1v1h-1zM669 795h1v1h-1zM596 796h1v1h-1zM669 796h1v1h-1zM596 797h1v1h-1zM669 797h1v1h-1zM596 798h1v1h-1zM669 798h1v1h-1zM596 799h1v1h-1zM669 799h1v1h-1zM586 800h21v1h-21zM632 800h38v1h-38zM587 801h1v1h-1zM605 801h1v1h-1zM669 801h1v1h-1zM588 802h1v1h-1zM604 802h1v1h-1zM669 802h1v1h-1zM589 803h1v1h-1zM603 803h1v1h-1zM669 803h1v1h-1zM590 804h1v1h-1zM602 804h1v1h-1zM669 804h1v1h-1zM591 805h1v1h-1zM601 805h1v1h-1zM669 805h1v1h-1zM592 806h1v1h-1zM600 806h1v1h-1zM669 806h1v1h-1zM593 807h1v1h-1zM599 807h1v1h-1zM669 807h1v1h-1zM594 808h1v1h-1zM598 808h1v1h-1zM669 808h1v1h-1zM595 809h1v1h-1zM597 809h1v1h-1zM659 809h21v1h-21zM596 810h1v1h-1zM659 810h1v1h-1zM678 810h1v1h-1zM660 811h1v1h-1zM677 811h1v1h-1zM661 812h1v1h-1zM676 812h1v1h-1zM662 813h1v1h-1zM675 813h1v1h-1zM663 814h1v1h-1zM674 814h1v1h-1zM664 815h1v1h-1zM673 815h1v1h-1zM665 816h1v1h-1zM673 816h1v1h-1zM666 817h1v1h-1zM672 817h1v1h-1zM667 818h1v1h-1zM671 818h1v1h-1zM668 819h1v1h-1zM670 819h1v1h-1zM669 820h1v1h-1z"/>
<g shape-rendering="crispEdges"><rect x="594.0" y="516.0" width="5" height="5" fill="#0000ff" stroke="none"/><rect x="594.0" y="589.0" width="5" height="5" fill="#0000ff" stroke="none"/><rect x="594.0" y="671.0" width="5" height="5" fill="#0000ff" stroke="none"/><rect x="667.0" y="598.0" width="5" height="5" fill="#0000ff" stroke="none"/><rect x="667.0" y="716.0" width="5" height="5" fill="#0000ff" stroke="none"/><rect x="667.0" y="798.0" width="5" height="5" fill="#0000ff" stroke="none"/></g>
<rect x="699" y="614" width="1" height="1" fill="#c8c070"/>
<g shape-rendering="crispEdges">
<rect x="12" y="9" width="13" height="13" fill="#c0c0c0"/>
<rect x="11" y="9" width="1" height="16" fill="#000"/>
<rect x="9" y="22" width="16" height="1" fill="#000"/>
<rect x="9" y="10" width="2" height="1" fill="#000"/>
<rect x="9" y="12" width="2" height="1" fill="#000"/>
<rect x="9" y="15" width="2" height="1" fill="#000"/>
<rect x="9" y="17" width="2" height="1" fill="#000"/>
<rect x="9" y="20" width="2" height="1" fill="#000"/>
<rect x="11" y="22" width="1" height="3" fill="#000"/>
<rect x="14" y="22" width="1" height="3" fill="#000"/>
<rect x="17" y="22" width="1" height="3" fill="#000"/>
<rect x="20" y="22" width="1" height="3" fill="#000"/>
<rect x="23" y="22" width="1" height="3" fill="#000"/>
</g>
<polyline fill="none" stroke="#ff0000" stroke-width="1.7" stroke-linejoin="round" stroke-linecap="round" points="12.3,17.4 15.6,13.7 17.4,13.7 19.6,16.1 21.6,16.1 24.4,12.8"/>
<g shape-rendering="crispEdges"><rect x="11" y="434" width="4" height="1" fill="#0000ff"/><rect x="14" y="430" width="2" height="9" fill="#0000ff"/></g>
<path d="M16,431.5 L21,427.3 M16,437.5 L22,442.7" stroke="#0000ff" stroke-width="0.9" fill="none"/>
<path d="M17.6,440.4 L20.6,438.9 L20.9,441.9 z" fill="#0000ff"/>
<rect x="1096.5" y="17.5" width="10" height="4" rx="0.8" fill="#f3f3f3" stroke="#434a62" stroke-width="1"/>
<rect x="1129.5" y="13.5" width="10" height="8" rx="0.8" fill="#f3f3f3" stroke="#434a62" stroke-width="1"/>
<rect x="1132.5" y="16.5" width="4" height="2" fill="#c9d6e6" stroke="#434a62" stroke-width="1"/>
<polygon points="1162.5,13.5 1165.7,13.5 1167.5,15.4 1169.3,13.5 1172.5,13.5 1170.4,17.5 1172.5,21.5 1169.3,21.5 1167.5,19.6 1165.7,21.5 1162.5,21.5 1164.6,17.5" fill="#f6f6f6" stroke="#434a62" stroke-width="1.25" stroke-linejoin="round"/>
<rect x="1096.5" y="435.5" width="10" height="4" rx="0.8" fill="#f3f3f3" stroke="#3a4058" stroke-width="1"/>
<rect x="1129.5" y="431.5" width="10" height="8" rx="0.8" fill="#f3f3f3" stroke="#3a4058" stroke-width="1"/>
<rect x="1132.5" y="434.5" width="4" height="2" fill="#8fb0d6" stroke="#3a4058" stroke-width="1"/>
<polygon points="1162.5,431.5 1165.7,431.5 1167.5,433.4 1169.3,431.5 1172.5,431.5 1170.4,435.5 1172.5,439.5 1169.3,439.5 1167.5,437.6 1165.7,439.5 1162.5,439.5 1164.6,435.5" fill="#f6f6f6" stroke="#3a4058" stroke-width="1.25" stroke-linejoin="round"/>
<polygon points="0,0 2.6,0 0,2.6" fill="#4a4a4a"/>
<polygon points="0,416 2.6,416 0,420.6" fill="#3a3a3a"/>
<polygon points="1190,0 1187.4,0 1190,2.6" fill="#4a4a4a"/>
</svg>
</body></html>
